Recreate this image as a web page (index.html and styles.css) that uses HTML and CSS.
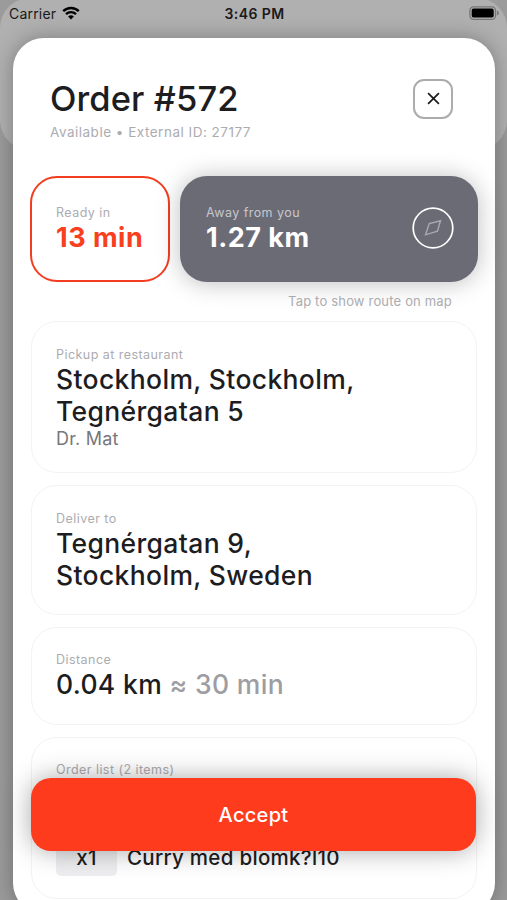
FILE: index.html
```
<!DOCTYPE html>
<html lang="en">
<head>
    <meta charset="UTF-8">
    <meta name="viewport" content="width=device-width, initial-scale=1.0">
    <title>Order #572</title>
    <link rel="stylesheet" href="styles.css">
</head>
<body>
    <div class="backdrop"></div>
    <header class="status-bar">
        <div class="status-bar__carrier">
            <span>Carrier</span>
            <svg class="status-bar__wifi" viewBox="0 0 18 14">
                <path d="M1.2 5.1a11.2 11.2 0 0 1 15.6 0M4 8.1a7.2 7.2 0 0 1 10 0" />
                <path class="status-bar__wifi-dot" d="M9 13.6L6.1 10.6a4.2 4.2 0 0 1 5.8 0z" />
            </svg>
        </div>
        <div class="status-bar__time">3:46 PM</div>
        <svg class="status-bar__battery" viewBox="0 0 31 14">
            <rect class="status-bar__battery-case" x="0.9" y="0.9" width="25.6" height="12.4" rx="3.5" />
            <rect x="2.7" y="2.6" width="22" height="9" rx="1.8" />
            <path class="status-bar__battery-tip" d="M28 4.6c2.4 1 2.4 4 0 5z" />
        </svg>
    </header>
    <main class="sheet">
        <div class="sheet__header">
            <div>
                <h1 class="sheet__title">Order #572</h1>
                <p class="sheet__subtitle">Available • External ID: 27177</p>
            </div>
            <button class="sheet__close" aria-label="Close">
                <svg class="sheet__close-image" viewBox="0 0 12 12">
                    <path d="M1 1L11 11M11 1L1 11" />
                </svg>
            </button>
        </div>
        <div class="summary">
            <div class="summary__ready">
                <div class="label">Ready in</div>
                <div class="summary__value">13 min</div>
            </div>
            <div class="summary__away">
                <div>
                    <div class="label label--light">Away from you</div>
                    <div class="summary__value">1.27 km</div>
                </div>
                <svg class="summary__compass" viewBox="0 0 42 42">
                    <circle cx="21" cy="21" r="19.8" />
                    <path d="M28.5 13.8L25.4 24.2L13.6 27.8L17.2 16.6z" />
                </svg>
            </div>
        </div>
        <p class="hint">Tap to show route on map</p>
        <section class="card card--pickup">
            <div class="label">Pickup at restaurant</div>
            <div class="card__value">Stockholm, Stockholm,<br>Tegnérgatan 5</div>
            <div class="card__note">Dr. Mat</div>
        </section>
        <section class="card card--deliver">
            <div class="label">Deliver to</div>
            <div class="card__value">Tegnérgatan 9,<br>Stockholm, Sweden</div>
        </section>
        <section class="card card--distance">
            <div class="label">Distance</div>
            <div class="card__value">0.04 km <span class="card__approx">≈ 30 min</span></div>
        </section>
        <section class="card card--list">
            <div class="label">Order list (2 items)</div>
            <div class="item">
                <div class="item__count">x1</div>
                <div class="item__name">Curry med blomk?l10</div>
            </div>
        </section>
    </main>
    <button class="accept">Accept</button>
</body>
</html>
```

FILE: styles.css
```
body {
    margin: 0;
    height: 900px;
    overflow: hidden;

    position: relative;

    background: #9b9b9b;

    font-family: Inter, "Liberation Sans", sans-serif;
    color: #1d1d1f;
}

/* previous screen, dimmed under the sheet */
.backdrop {
    position: absolute;
    top: -2px;
    left: 0;

    width: 100%;
    height: 152px;

    border-radius: 30px;
    background: #b0b0b0;
}

.status-bar {
    height: 37.5px;
    padding: 0 7px 0 9px;

    box-sizing: border-box;

    display: grid;
    grid-template-columns: 1fr auto 1fr;
    align-items: start;

    position: relative;

    color: #1a1a1a;
    font-size: 14px;
    line-height: 28px;
}

.status-bar__carrier {
    display: flex;
    align-items: flex-start;
    gap: 6px;

    letter-spacing: 0.2px;
}

.status-bar__wifi {
    width: 18px;
    height: 14px;
    margin-top: 6px;

    fill: none;
    stroke: #000;
    stroke-width: 2.4;
}

.status-bar__wifi-dot {
    fill: #000;
    stroke: none;
}

.status-bar__time {
    font-weight: 600;
    letter-spacing: 0.4px;
}

.status-bar__battery {
    justify-self: end;

    width: 31px;
    height: 14px;
    margin-top: 6px;
}

.status-bar__battery-case {
    fill: none;
    stroke: #777;
    stroke-width: 1.3;
}

.status-bar__battery-tip {
    fill: #777;
}

.sheet {
    height: 876px;
    margin: 0 12px 0 13px;
    padding: 40px 18px 0;

    box-sizing: border-box;

    border-radius: 31px;
    background: #fff;
    box-shadow: 0 0 20px rgba(0, 0, 0, 0.3);

    position: relative;
}

.sheet__header {
    height: 98.8px;
    padding: 0 24px 0 19px;

    box-sizing: border-box;

    display: flex;
    align-items: flex-start;
    justify-content: space-between;
}

.sheet__title {
    margin: 0;

    font-size: 34.5px;
    font-weight: 500;
    line-height: 41px;
    letter-spacing: 0.1px;
}

.sheet__subtitle {
    margin: 4px 0 0;

    color: #acacb0;
    font-size: 13.5px;
    line-height: 18px;
    letter-spacing: 0.5px;
}

.sheet__close {
    width: 40px;
    height: 40px;
    margin-top: 1.3px;
    padding: 0;

    display: grid;
    place-items: center;

    border: 2px solid #acacac;
    border-radius: 11px;
    background: #fff;
}

.sheet__close-image {
    width: 13px;
    height: 13px;

    fill: none;
    stroke: #1d1d1f;
    stroke-width: 1.6;
}

.summary {
    height: 106px;
    margin: 0 -1px;

    display: grid;
    grid-template-columns: 140px 1fr;
    gap: 10px;
}

.summary__ready {
    padding: 26px 0 0 24px;

    border: 2px solid #f23d20;
    border-radius: 27px;

    color: #f8401f;
}

.summary__away {
    padding: 28px 24px 0 26px;

    display: flex;
    justify-content: space-between;

    border-radius: 27px;
    background: #6b6b76;
    box-shadow: 0 1px 25px rgba(0, 0, 0, 0.26);

    color: #fff;
}

.summary__value {
    font-size: 27px;
    font-weight: 700;
    line-height: 34px;
    letter-spacing: 0.5px;
}

.summary__compass {
    width: 42px;
    height: 42px;
    margin-top: 3px;

    fill: none;
    stroke: #fff;
    stroke-width: 1.7;
}

.summary__compass path {
    stroke: #a9a9b0;
    stroke-width: 1.4;
}

.label {
    color: #acacb0;
    font-size: 12.5px;
    line-height: 17px;
    letter-spacing: 0.45px;
}

.label--light {
    color: #c6c6cb;
}

.hint {
    margin: 10px 25px 11px 0;

    color: #acacb0;
    font-size: 13px;
    line-height: 18px;
    letter-spacing: 0.18px;
    text-align: right;
}

.card {
    margin-bottom: 12px;
    padding: 24px 24px 0;

    box-sizing: border-box;

    border: 1px solid #f3f3f4;
    border-radius: 26px;
}

.card--pickup {
    height: 152px;
}

.card--deliver {
    height: 130px;
}

.card--distance {
    height: 98px;
}

.card--list {
    height: 162px;
}

.card--distance .label,
.card--list .label {
    margin-top: -1px;
}

.card__value {
    font-size: 26.5px;
    font-weight: 500;
    line-height: 32px;
    letter-spacing: 0.35px;
}

.card__note {
    color: #77777c;
    font-size: 18px;
    line-height: 23px;
    letter-spacing: 0.2px;
}

.card__approx {
    color: #9d9da2;
}

.item {
    margin-top: 62px;

    display: flex;
    align-items: center;
    gap: 10px;

    font-size: 20.5px;
    font-weight: 500;
    line-height: 36px;
    letter-spacing: 0.3px;
}

.item__count {
    width: 61px;

    border-radius: 5px;
    background: #eeeef0;

    text-align: center;
}

.accept {
    position: absolute;
    top: 778px;
    left: 31px;

    width: 445px;
    height: 73px;
    padding: 0;

    border: 0;
    border-radius: 20px;
    background: #ff3b1d;
    box-shadow: 0 0 26px rgba(0, 0, 0, 0.34);

    color: #fff;
    font-family: inherit;
    font-size: 20px;
    font-weight: 500;
    letter-spacing: 0.3px;
}
```
